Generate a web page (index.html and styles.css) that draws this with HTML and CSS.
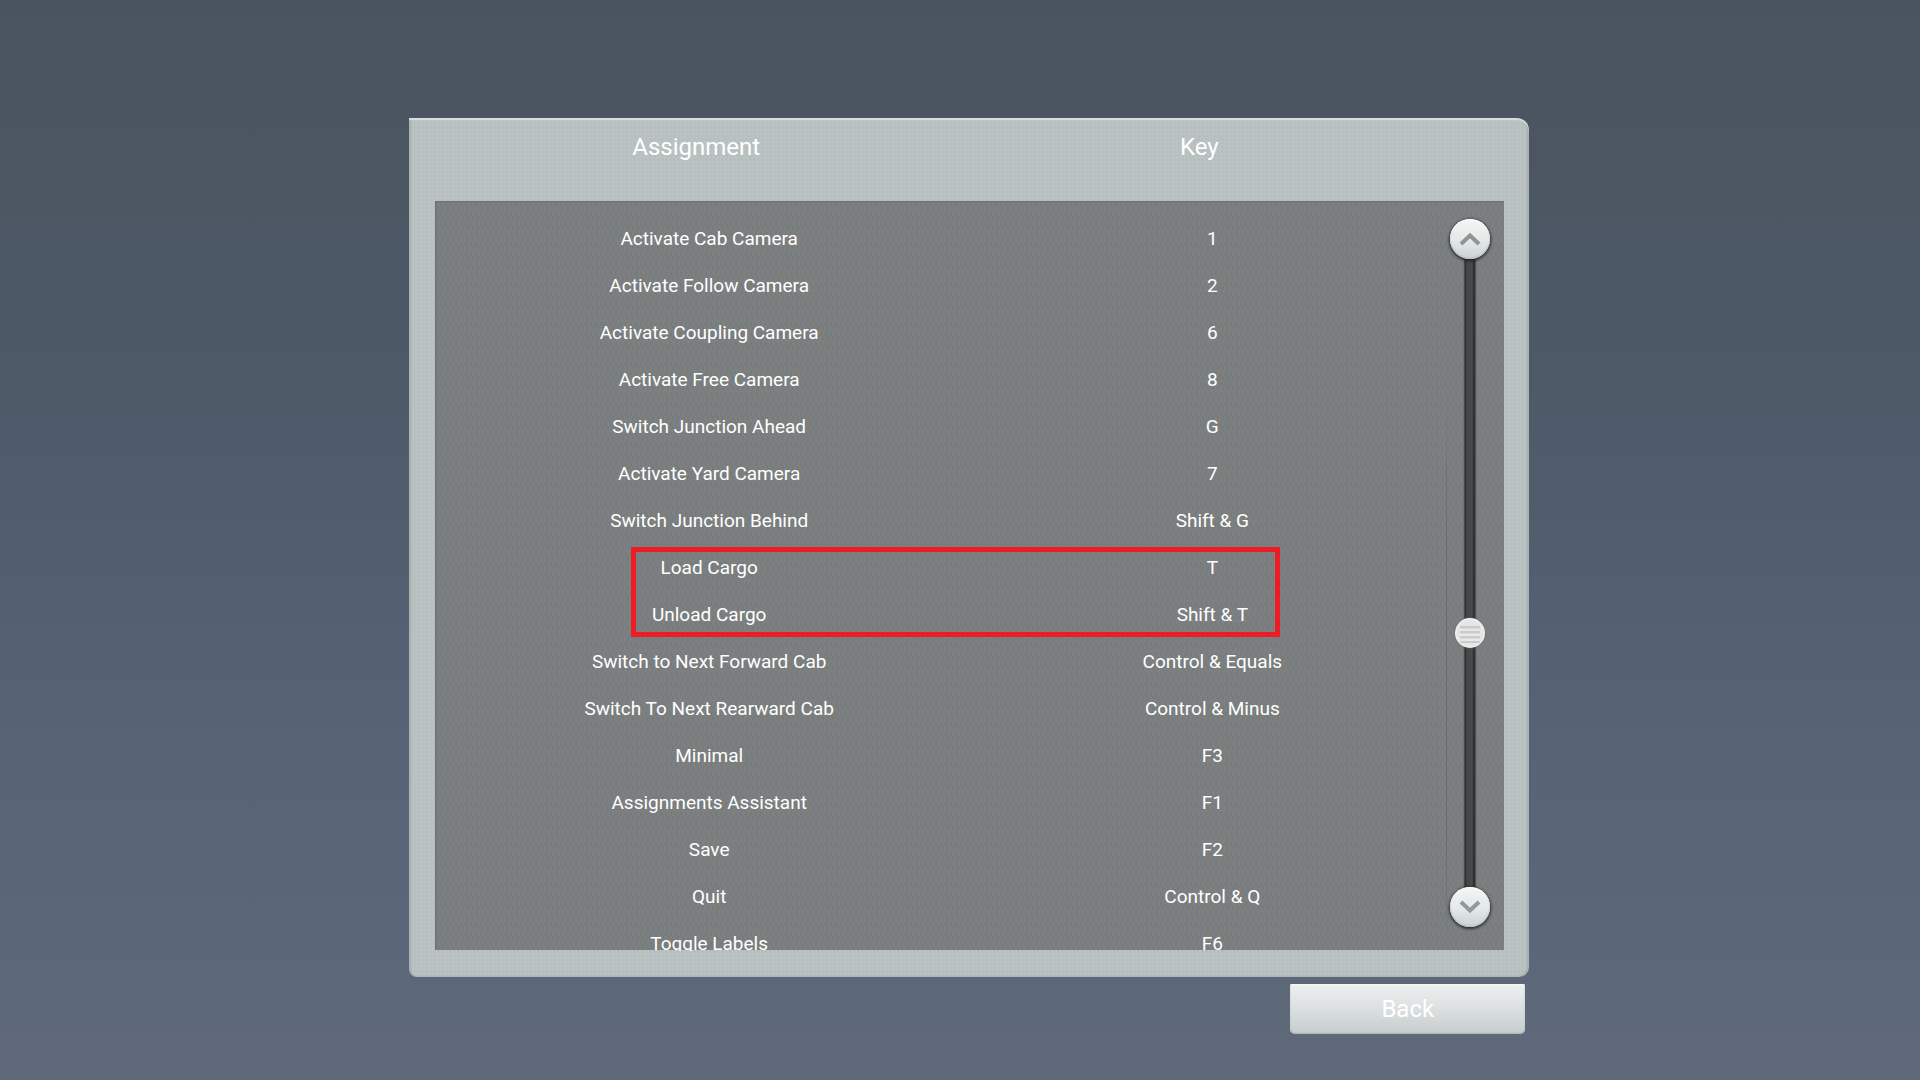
FILE: index.html
```html
<!DOCTYPE html>
<html lang="en">
<head>
<meta charset="utf-8">
<title>Key Assignments</title>
<link rel="stylesheet" href="styles.css">
</head>
<body>
<main class="screen">
  <section class="panel">
    <header class="panel-header">
      <h2 class="heading" id="assignment">Assignment</h2>
      <h2 class="heading" id="key">Key</h2>
    </header>
    <div class="well">
      <div class="list">
        <table class="bindings" aria-labelledby="assignment key">
          <tbody>
            <tr><td>Activate Cab Camera</td><td>1</td></tr>
            <tr><td>Activate Follow Camera</td><td>2</td></tr>
            <tr><td>Activate Coupling Camera</td><td>6</td></tr>
            <tr><td>Activate Free Camera</td><td>8</td></tr>
            <tr><td>Switch Junction Ahead</td><td>G</td></tr>
            <tr><td>Activate Yard Camera</td><td>7</td></tr>
            <tr><td>Switch Junction Behind</td><td>Shift &amp; G</td></tr>
          </tbody>
          <tbody class="marked">
            <tr><td>Load Cargo</td><td>T</td></tr>
            <tr><td>Unload Cargo</td><td>Shift &amp; T</td></tr>
          </tbody>
          <tbody>
            <tr><td>Switch to Next Forward Cab</td><td>Control &amp; Equals</td></tr>
            <tr><td>Switch To Next Rearward Cab</td><td>Control &amp; Minus</td></tr>
            <tr><td>Minimal</td><td>F3</td></tr>
            <tr><td>Assignments Assistant</td><td>F1</td></tr>
            <tr><td>Save</td><td>F2</td></tr>
            <tr><td>Quit</td><td>Control &amp; Q</td></tr>
            <tr><td>Toggle Labels</td><td>F6</td></tr>
          </tbody>
        </table>
      </div>
      <div class="scrollbar">
        <button class="arrow" type="button" aria-label="Scroll up">
          <svg width="22" height="14" viewBox="0 0 22 14"><path d="M2 12 11 3.500 20 12" fill="none" stroke="#8f9495" stroke-width="4"/></svg>
        </button>
        <input class="slider" type="range" min="0" max="100" value="60" aria-label="Scroll position">
        <button class="arrow" type="button" aria-label="Scroll down">
          <svg width="22" height="14" viewBox="0 0 22 14"><path d="M2 2 11 10.500 20 2" fill="none" stroke="#8f9b9b" stroke-width="4"/></svg>
        </button>
      </div>
    </div>
  </section>
  <button class="back" type="button">Back</button>
</main>
</body>
</html>
```

FILE: styles.css
```css
* {
  box-sizing: border-box;
}

body {
  margin: 0;
  font-family: Roboto, "Liberation Sans", sans-serif;
  color: #fff;
  background: linear-gradient(#4a545f, #4e5968 35%, #566476 70%, #5f697a) fixed;
}

.screen {
  display: flex;
  flex-direction: column;
  height: 100vh;
  padding: 118px 20.35% 46px 21.3%;
}

.panel {
  flex: 1;
  min-height: 0;
  display: flex;
  flex-direction: column;
  padding: 0 25px 27px 26px;
  border-radius: 0 12px 10px 8px;
  background:
    radial-gradient(circle at 1px 1px, rgba(80, 100, 100, 0.1) 1px, transparent 2px) 0 0 / 4px 4px,
    radial-gradient(circle at 3px 3px, rgba(80, 100, 100, 0.08) 1px, transparent 2px) 0 0 / 4px 4px,
    #c0c7c7;
  box-shadow: inset 0 2px 1px #d8dfdf, inset 2px 0 2px #a5adad, inset -2px 0 2px #a5adad;
}

.panel-header {
  display: grid;
  grid-template-columns: 54.5% 45.5%;
  height: 83px;
  margin-left: -13px;
  padding: 15px 76px 0 0;
}

.heading {
  margin: 0;
  font-size: 24px;
  line-height: 28px;
  font-weight: 400;
  text-align: center;
}

.well {
  flex: 1;
  min-height: 0;
  display: flex;
  background:
    radial-gradient(ellipse 1px 3px at 1px 3px, rgba(50, 58, 58, 0.14), transparent) 0 0 / 5px 10px,
    radial-gradient(ellipse 1px 3px at 3px 7px, rgba(50, 58, 58, 0.14), transparent) 0 0 / 5px 10px,
    #7c8080;
  box-shadow: inset 1px 1px 1px #6c7070;
}

.list {
  flex: 1;
  overflow: hidden;
  margin-bottom: -1px;
  padding: 15px 5px 0 0;
}

.bindings {
  width: 100%;
  table-layout: fixed;
  border-collapse: collapse;
  font-size: 19px;
  line-height: 24px;
}

.bindings td {
  height: 47px;
  padding: 0 0 2px;
  text-align: center;
}

.bindings td:first-child {
  width: 54.5%;
}

.marked {
  position: relative;
}

.marked::after {
  content: "";
  position: absolute;
  inset: 2px 16% 2px 19.5%;
  border: 5px solid #ee1c24;
}

.scrollbar {
  display: flex;
  flex-direction: column;
  align-items: center;
  width: 58px;
  padding: 18px 10px 23px 0;
  background: linear-gradient(transparent 25%, #686c6c 45%, #686c6c 85%, transparent) 0 0 / 1px 100% no-repeat;
}

.arrow {
  flex: none;
  z-index: 1;
  display: flex;
  align-items: center;
  justify-content: center;
  width: 40px;
  height: 40px;
  padding: 0;
  border: 0;
  border-radius: 50%;
  background: linear-gradient(#f4f5f5, #e4e8e8 55%, #cbd1d1);
  box-shadow: inset 0 1px 1px #fff, inset 0 -1px 2px #b4baba, 0 1px 3px 1px rgba(25, 32, 34, 0.85);
}

.slider {
  flex: 1;
  min-height: 0;
  width: 30px;
  margin: 0;
  appearance: none;
  writing-mode: vertical-lr;
  background: linear-gradient(90deg, transparent 8px, #626666 9px, #292c2d 10px, #454647 12px, #494a4b 17px, #292c2d 19px, #343738 20px, #6a6e6e 21px, transparent 22px);
}

.slider::-webkit-slider-thumb {
  appearance: none;
  width: 30px;
  height: 30px;
  border-radius: 50%;
  background:
    repeating-linear-gradient(#cbcbcb 0 2px, #e8e8e8 3px 5px) 50% 60% / 20px 17px no-repeat,
    #e5e5e5;
  box-shadow: inset 0 0 2px 1px #f7f7f7, 0 0 2px #626666;
}

.back {
  flex: none;
  align-self: flex-end;
  width: 235px;
  height: 50px;
  margin: 7px 4px 0 0;
  padding: 0;
  border: 0;
  border-radius: 2px 2px 5px 5px;
  background: linear-gradient(#eff1f1, #dde1e1 45%, #c6cdcd);
  box-shadow: inset 0 1px 1px #f8f9f9, inset 0 -1px 2px #a9b1b1;
  color: #fff;
  font: 24px/28px Roboto, "Liberation Sans", sans-serif;
}
```
